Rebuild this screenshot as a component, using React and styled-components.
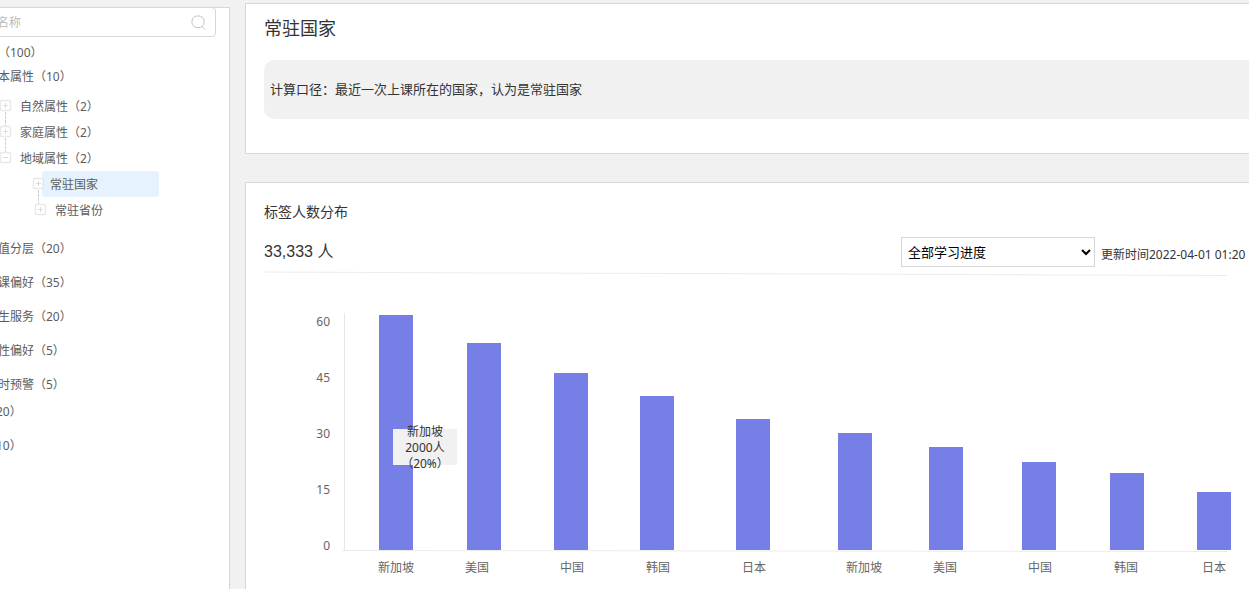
import React from "react";
import styled, { createGlobalStyle } from "styled-components";

const GlobalStyle = createGlobalStyle`
  * {
    box-sizing: border-box;
  }
  body {
    margin: 0;
    background: #f1f1f1;
    color: #333;
    font-family: "Noto Sans", "Noto Sans CJK SC", sans-serif;
    font-size: 12px;
    line-height: 16px;
  }
`;

const Page = styled.div`
  display: flex;
  align-items: stretch;
  gap: 15px;
  min-height: 100vh;
  overflow: hidden;
`;

const SideBar = styled.aside`
  flex: none;
  width: 234px;
  margin: 7px 0 0 -4px;
  background: #fff;
  border-top: 1px solid #d7d7d7;
  border-right: 1px solid #d7d7d7;
  color: #5c5c5c;
`;

const SearchBox = styled.label`
  display: flex;
  align-items: center;
  height: 30px;
  margin: -1px 13px 4px 0;
  padding-right: 9px;
  border: 1px solid #d7d7d7;
  border-radius: 4px;
`;

const SearchInput = styled.input`
  flex: 1;
  min-width: 0;
  padding: 2px 0 0;
  border: none;
  outline: none;
  background: none;
  font: inherit;

  &::placeholder {
    color: #bbb;
  }
`;

const List = styled.ul`
  display: flex;
  flex-direction: column;
  gap: ${(props) => props.$gap || 0}px;
  margin: ${(props) => props.$top || 0}px 0 0;
  padding: 0;
  list-style: none;
`;

const TextRow = styled.li`
  height: ${(props) => props.$height || 20}px;
  line-height: ${(props) => props.$height || 20}px;
  padding-left: ${(props) => (props.$flush ? 0 : 2)}px;
  white-space: nowrap;
`;

const TreeRow = styled.li`
  display: flex;
  align-items: center;
  height: 26px;
  padding-left: ${(props) => props.$indent}px;
`;

const Toggle = styled.button`
  position: relative;
  z-index: 1;
  flex: none;
  width: 12px;
  height: 26px;
  padding: 0;
  border: none;
  background: none;

  svg {
    display: block;
    overflow: visible;
  }
`;

const TreeLabel = styled.span`
  height: 26px;
  line-height: 28px;
  padding-left: 8px;
  white-space: nowrap;
  ${(props) =>
    props.$selected &&
    `
    width: 117px;
    margin-left: -3px;
    border-radius: 3px;
    background: #e6f3fe;
  `}
`;

const Main = styled.main`
  flex: 1;
  min-width: 0;
  display: flex;
  flex-direction: column;
  gap: 28px;
  padding-top: 3px;
`;

const Card = styled.section`
  padding: 0 0 0 18px;
  background: #fff;
  border: 1px solid #d7d7d7;
  border-right: none;
`;

const InfoCard = styled(Card)`
  padding-top: 12px;
  padding-bottom: 34px;
`;

const ChartCard = styled(Card)`
  flex: 1;
  padding-top: 19px;
  border-bottom: none;
`;

const Title = styled.h1`
  margin: 0 0 20px;
  font-size: 18px;
  font-weight: 400;
  line-height: 24px;
`;

const Note = styled.p`
  margin: 0;
  padding: 19px 6px 20px;
  border-radius: 10px 0 0 10px;
  background: #f1f1f1;
  font-size: 13px;
  line-height: 20px;
`;

const SubTitle = styled.h2`
  margin: 0;
  font-size: 14px;
  font-weight: 400;
  line-height: 20px;
`;

const Toolbar = styled.div`
  display: flex;
  justify-content: space-between;
  margin-top: 15px;
`;

const Total = styled.div`
  font-family: "Liberation Sans", "Noto Sans CJK SC", sans-serif;
  font-size: 16px;
  line-height: 30px;
`;

const Filter = styled.div`
  display: flex;
  flex: 0 0 348px;
  gap: 6px;
  white-space: nowrap;
`;

const Select = styled.select`
  flex: none;
  width: 194px;
  height: 30px;
  padding: 0 2px;
  border: 1px solid #d7d7d7;
  background: #fff;
  color: #000;
  font-family: inherit;
  font-size: 13px;
`;

const Updated = styled.span`
  padding-top: 10px;
`;

const Rule = styled.svg`
  display: block;
  width: calc(100% - 22px);
  height: 5px;
  margin-top: 4px;
`;

const ChartArea = styled.div`
  position: relative;
  margin-top: 25px;
`;

const Chart = styled.svg`
  display: block;
  width: 100%;
  height: 288px;

  text {
    fill: #666;
    font-size: 12px;
  }
`;

const Tip = styled.div`
  position: absolute;
  left: 129px;
  top: 128px;
  display: flex;
  align-items: center;
  justify-content: center;
  width: 64px;
  height: 36px;
  padding-top: 2px;
  background: #f1f1f1;
  text-align: center;
`;

const summary = ["（100）", "本属性（10）"];

const groups = ["值分层（20）", "课偏好（35）", "生服务（20）", "性偏好（5）", "时预警（5）"];

const others = ["20）", "10）"];

const ticks = [60, 45, 30, 15, 0];

const bars = [
  { x: 115, height: 235, name: "新加坡", labelX: 132 },
  { x: 203, height: 207, name: "美国", labelX: 213 },
  { x: 290, height: 177, name: "中国", labelX: 308 },
  { x: 376, height: 154, name: "韩国", labelX: 394 },
  { x: 472, height: 131, name: "日本", labelX: 490 },
  { x: 574, height: 117, name: "新加坡", labelX: 600 },
  { x: 665, height: 103, name: "美国", labelX: 681 },
  { x: 758, height: 88, name: "中国", labelX: 776 },
  { x: 846, height: 77, name: "韩国", labelX: 862 },
  { x: 933, height: 58, name: "日本", labelX: 950 },
];

function TreeToggle({ label, open, line }) {
  return (
    <Toggle type="button" aria-label={label} aria-expanded={!!open}>
      <svg width="12" height="26" fill="none">
        <rect x="0.5" y="7.5" width="10" height="10" rx="1" stroke="#e9e9e9" strokeWidth="1.5" />
        <path d={open ? "M3 12.5h5" : "M3 12.5h5M5.5 10v5"} stroke="#dcdcdc" />
        {line && <path d="M5.5 19V33" stroke="#ccc" strokeDasharray="3 1" />}
      </svg>
    </Toggle>
  );
}

function TagTree() {
  return (
    <SideBar>
      <SearchBox>
        <SearchInput type="text" placeholder="名称" aria-label="名称" />
        <svg width="15" height="15" viewBox="0 0 15 15" fill="none" stroke="#c4c4c4">
          <rect x="1" y="1" width="12" height="11.5" rx="5" />
          <path d="M11 11.5l3 3" />
        </svg>
      </SearchBox>
      <List>
        {summary.map((label) => (
          <TextRow key={label} $height={24}>
            {label}
          </TextRow>
        ))}
      </List>
      <List $top={4}>
        <TreeRow $indent={4}>
          <TreeToggle label="自然属性" line />
          <TreeLabel>自然属性（2）</TreeLabel>
        </TreeRow>
        <TreeRow $indent={4}>
          <TreeToggle label="家庭属性" line />
          <TreeLabel>家庭属性（2）</TreeLabel>
        </TreeRow>
        <TreeRow $indent={4}>
          <TreeToggle label="地域属性" open />
          <TreeLabel>地域属性（2）</TreeLabel>
        </TreeRow>
        <TreeRow $indent={37}>
          <TreeToggle label="常驻国家" line />
          <TreeLabel $selected>常驻国家</TreeLabel>
        </TreeRow>
        <TreeRow $indent={39}>
          <TreeToggle label="常驻省份" />
          <TreeLabel>常驻省份</TreeLabel>
        </TreeRow>
      </List>
      <List $top={16} $gap={14}>
        {groups.map((label) => (
          <TextRow key={label}>{label}</TextRow>
        ))}
      </List>
      <List $top={7} $gap={14}>
        {others.map((label) => (
          <TextRow key={label} $flush>
            {label}
          </TextRow>
        ))}
      </List>
    </SideBar>
  );
}

function BarChart() {
  return (
    <ChartArea>
      <Chart role="img" aria-label="标签人数分布">
        <path d="M80.5 12V249" stroke="#e6e6e6" />
        <path d="M78 249.5L964 250.5" stroke="#ececec" />
        {ticks.map((tick, i) => (
          <text key={tick} x="66" y={25 + i * 56} textAnchor="end">
            {tick}
          </text>
        ))}
        {bars.map((bar) => (
          <React.Fragment key={bar.x}>
            <rect x={bar.x} y={249 - bar.height} width="34" height={bar.height} fill="#757fe6" />
            <text x={bar.labelX} y="271" textAnchor="middle">
              {bar.name}
            </text>
          </React.Fragment>
        ))}
      </Chart>
      <Tip>
        <span>
          新加坡
          <br />
          2000人
          <br />
          （20%）
        </span>
      </Tip>
    </ChartArea>
  );
}

function App() {
  return (
    <Page>
      <GlobalStyle />
      <TagTree />
      <Main>
        <InfoCard>
          <Title>常驻国家</Title>
          <Note>计算口径：最近一次上课所在的国家，认为是常驻国家</Note>
        </InfoCard>
        <ChartCard>
          <SubTitle>标签人数分布</SubTitle>
          <Toolbar>
            <Total>33,333 人</Total>
            <Filter>
              <Select aria-label="学习进度" defaultValue="all">
                <option value="all">全部学习进度</option>
              </Select>
              <Updated>更新时间2022-04-01 01:20</Updated>
            </Filter>
          </Toolbar>
          <Rule viewBox="0 0 962 5" preserveAspectRatio="none">
            <path d="M0 1L962 4.5" stroke="#ececec" />
          </Rule>
          <BarChart />
        </ChartCard>
      </Main>
    </Page>
  );
}

export default App;
